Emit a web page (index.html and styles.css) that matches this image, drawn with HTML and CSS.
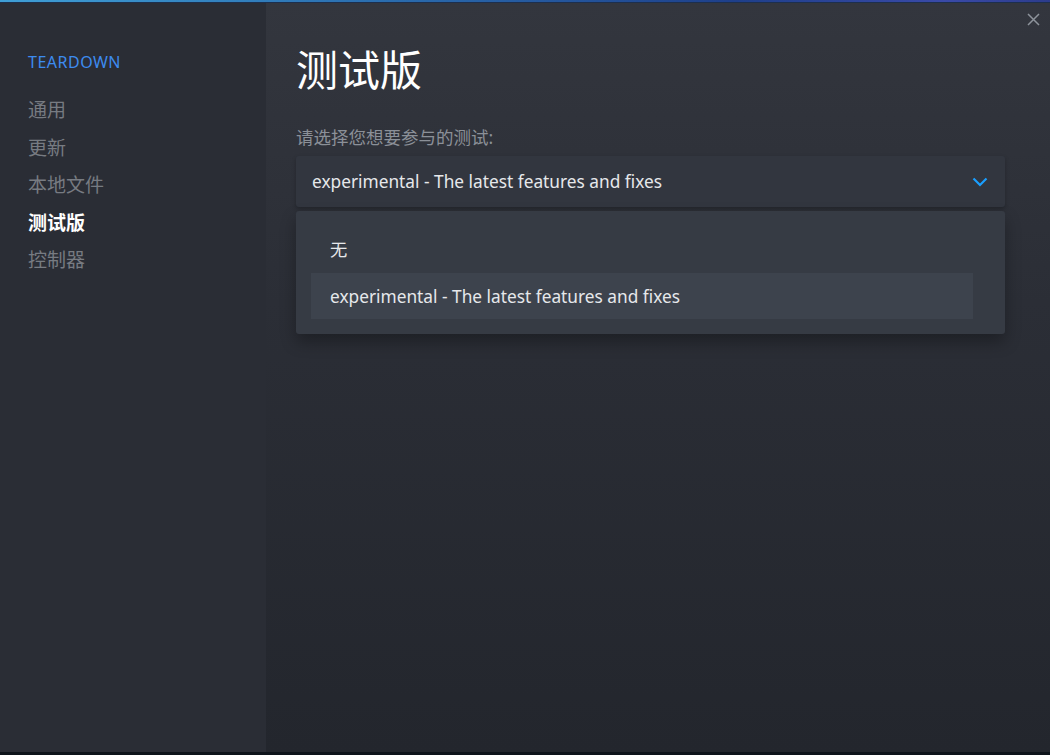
FILE: index.html
```html
<!DOCTYPE html>
<html lang="zh-CN">
<head>
    <meta charset="UTF-8">
    <meta name="viewport" content="width=device-width, initial-scale=1.0">
    <title>测试版</title>
    <link rel="stylesheet" href="styles.css">
</head>
<body>
    <div class="top-line"></div>
    <div class="window">
        <nav class="sidebar">
            <div class="game-name">TEARDOWN</div>
            <ul class="nav-list">
                <li class="nav-item">通用</li>
                <li class="nav-item">更新</li>
                <li class="nav-item">本地文件</li>
                <li class="nav-item active">测试版</li>
                <li class="nav-item">控制器</li>
            </ul>
        </nav>
        <main class="content">
            <button class="close" aria-label="关闭">
                <svg width="13" height="13" viewBox="0 0 13 13"><path d="M1 1L12 12M12 1L1 12" stroke="#8d939b" stroke-width="1.5" fill="none"/></svg>
            </button>
            <h1 class="title">测试版</h1>
            <div class="label">请选择您想要参与的测试:</div>
            <div class="select">
                <span class="select-value">experimental - The latest features and fixes</span>
                <svg class="chevron" width="16" height="10" viewBox="0 0 16 10"><path d="M1.5 1.5L8 8L14.5 1.5" stroke="#1a9fff" stroke-width="2.2" fill="none"/></svg>
            </div>
            <div class="menu">
                <div class="option">无</div>
                <div class="option selected">experimental - The latest features and fixes</div>
            </div>
        </main>
    </div>
    <div class="bottom-line"></div>
</body>
</html>
```

FILE: styles.css
```css
html, body {
    height: 100%;
    margin: 0;
}
body {
    display: flex;
    flex-direction: column;
    background: #0e141b;
    font-family: "Noto Sans", "Noto Sans CJK SC", sans-serif;
    overflow: hidden;
}
.top-line {
    height: 2px;
    flex: none;
    background: linear-gradient(90deg, #3f9fd6 0%, #2b6fb0 35%, #1e3f8a 70%, #3a4aa8 90%, #2c3c8c 100%);
    border-bottom: 1px solid #1d2f4d;
}
.window {
    flex: 1;
    display: flex;
    min-height: 0;
}
.bottom-line {
    height: 3px;
    flex: none;
    background: #0e141b;
}
.sidebar {
    width: 266px;
    flex: none;
    background: #2a2d35;
    padding: 46px 0 0 28px;
    box-sizing: border-box;
}
.game-name {
    color: #3d8bef;
    font-size: 16px;
    line-height: 26px;
    letter-spacing: 0.5px;
}
.nav-list {
    list-style: none;
    margin: 17px 0 0;
    padding: 0;
}
.nav-item {
    color: #777b82;
    font-size: 19px;
    line-height: 37.5px;
}
.nav-item.active {
    color: #ffffff;
    font-weight: 700;
}
.content {
    flex: 1;
    position: relative;
    padding: 38px 45px 0 30px;
    background: linear-gradient(180deg, #33363e 0%, #2b2e36 40%, #23262d 100%);
}
.close {
    position: absolute;
    top: 9px;
    right: 9px;
    background: none;
    border: none;
    padding: 0;
    width: 15px;
    height: 15px;
    display: flex;
    align-items: center;
    justify-content: center;
}
.title {
    margin: 0;
    color: #ffffff;
    font-size: 42px;
    font-weight: 400;
    line-height: 58px;
}
.label {
    margin-top: 26px;
    color: #8b9098;
    font-size: 17.5px;
    line-height: 24px;
}
.select {
    margin-top: 7px;
    height: 51px;
    display: flex;
    align-items: center;
    justify-content: space-between;
    padding: 0 17px 0 16px;
    background: #32363f;
    border-radius: 3px;
    box-shadow: 0 2px 4px rgba(0, 0, 0, 0.25);
}
.select-value {
    color: #e6e8eb;
    font-size: 17.3px;
}
.menu {
    margin-top: 4px;
    padding: 14px 32px 15px 15px;
    background: #363b44;
    border-radius: 3px;
    box-shadow: 0 8px 16px rgba(0, 0, 0, 0.3);
    display: flex;
    flex-direction: column;
    gap: 2px;
}
.option {
    height: 46px;
    display: flex;
    align-items: center;
    padding-left: 19px;
    color: #e6e8eb;
    font-size: 17.3px;
}
.option.selected {
    background: #3d434d;
}
```
